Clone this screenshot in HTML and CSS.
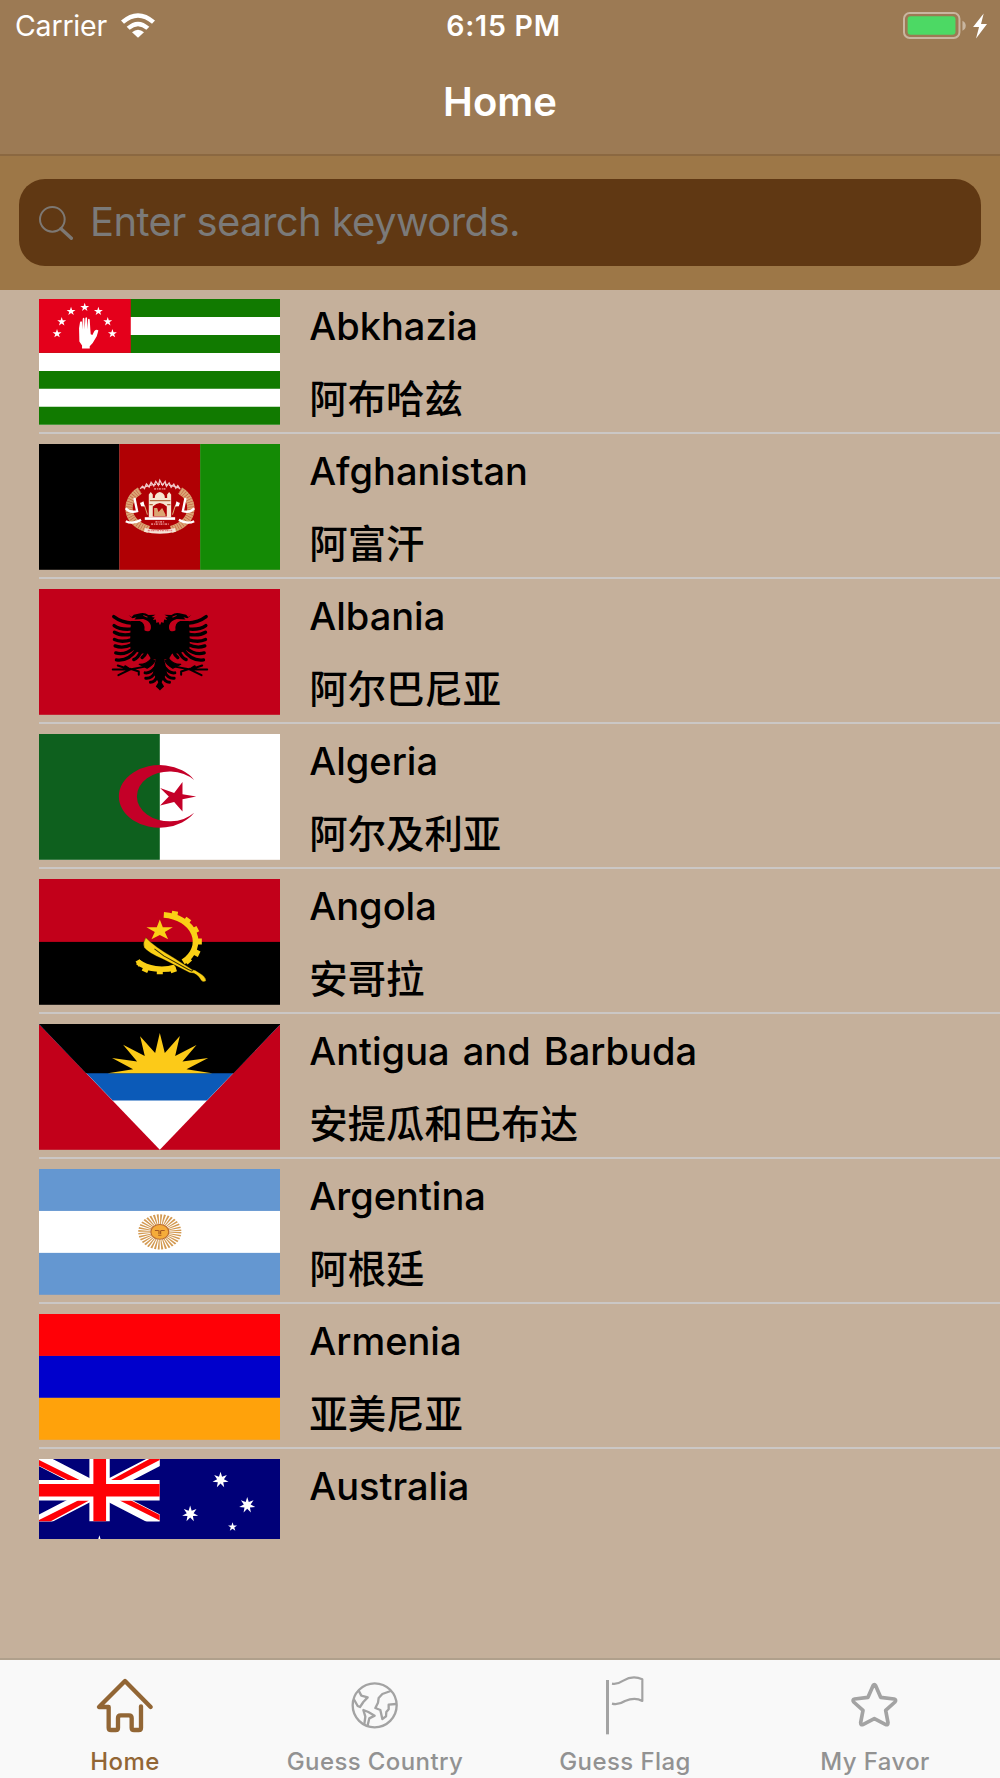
FILE: index.html
```html
<!DOCTYPE html>
<html lang="en">
<head>
    <meta charset="UTF-8">
    <meta name="viewport" content="width=device-width, initial-scale=1.0">
    <title>Home</title>
    <link rel="stylesheet" href="styles.css">
</head>
<body>
    <div class="screen">
        <!-- Status bar and title -->
        <header class="header">
            <div class="status">
                <div class="status-left">
                    <span class="carrier">Carrier</span>
                    <svg class="wifi" viewBox="0 0 102 74">
                        <path d="M0 22Q51-22 102 22L93 32Q51-4 9 32Z"/>
                        <path d="M17 41Q51 10 85 41L76 50Q51 29 26 50Z"/>
                        <path d="M33 57Q51 42 69 57L51 74Z"/>
                    </svg>
                </div>
                <span class="time">6:15 PM</span>
                <div class="status-right">
                    <svg class="battery" viewBox="0 0 256 84">
                        <rect x="3" y="6" width="167" height="75" rx="17" fill="none" stroke="#c9b6a0" stroke-width="6"/>
                        <rect x="14" y="16" width="144" height="55" rx="9" fill="#4cd964"/>
                        <path d="M179 29Q189 34 189 44T179 59Z" fill="#c9b6a0"/>
                        <path d="M243 7L211 48H229L220 83L253 39H235Z" fill="#fff"/>
                    </svg>
                </div>
            </div>
            <h1 class="title">Home</h1>
        </header>

        <!-- Search -->
        <div class="search">
            <div class="search-field">
                <svg class="search-icon" viewBox="0 0 102 102" fill="none" stroke="#7d7873" stroke-linecap="round">
                    <circle cx="40" cy="40" r="37" stroke-width="6"/>
                    <path d="M66 68L97 97" stroke-width="10"/>
                </svg>
                <span class="placeholder">Enter search keywords.</span>
            </div>
        </div>

        <!-- Country list -->
        <ul class="list">
            <li class="row">
                <svg class="flag" viewBox="0 0 724 378" preserveAspectRatio="none">
                    <defs>
                        <path id="star5" d="M0-14L3.200-4.300H13.400L5.300 1.700L8.200 11.300L0 5.400L-8.200 11.300L-5.300 1.700L-13.400-4.300H-3.200Z"/>
                    </defs>
                    <rect width="724" height="378" fill="#fff"/>
                    <path d="M0 0H724V54H0ZM0 108H724V162H0ZM0 216H724V270H0ZM0 324H724V378H0Z" fill="#117a00"/>
                    <rect width="275" height="162" fill="#e4001b"/>
                    <g transform="translate(-117 -44)" fill="#fff">
                        <use href="#star5" x="254" y="69"/>
                        <use href="#star5" x="213" y="81"/>
                        <use href="#star5" x="295" y="81"/>
                        <use href="#star5" x="185" y="112"/>
                        <use href="#star5" x="323" y="112"/>
                        <use href="#star5" x="171" y="148"/>
                        <use href="#star5" x="337" y="148"/>
                        <path d="M246 193V184L238 172L237 132L240 113Q244 108 246 114L247 136L248 103Q251 98 253 103L254 135L256 101Q259 96 261 101L262 135L264 105Q267 101 269 106L271 138L272 150L277 152L283 140Q290 134 295 139L290 156L278 176L269 186V193Z"/>
                    </g>
                </svg>
                <div class="names"><span class="en">Abkhazia</span><span class="zh">阿布哈兹</span></div>
            </li>
            <li class="row">
                <svg class="flag" viewBox="0 0 724 378" preserveAspectRatio="none">
                    <rect width="241" height="378" fill="#000"/>
                    <rect x="241" width="242" height="378" fill="#b00004"/>
                    <rect x="483" width="241" height="378" fill="#148a05"/>
                    <g transform="translate(-26 -28)" fill="none">
                        <g stroke="#dba673" stroke-width="22">
                            <path d="M328 168C284 195 278 260 355 285M449 168C493 195 499 260 422 285"/>
                        </g>
                        <g stroke="#c0503c" stroke-width="20" stroke-dasharray="1.500 6">
                            <path d="M328 168C284 195 278 260 355 285M449 168C493 195 499 260 422 285"/>
                        </g>
                        <g stroke="#fff" stroke-width="7">
                            <path d="M286 221Q298 236 320 230L312 190M491 221Q479 236 457 230L465 190M286 260Q306 270 332 256M491 260Q471 270 445 256"/>
                            <path d="M342 286Q388 298 435 286" stroke-width="12" stroke="#f5e3d8"/>
                        </g>
                        <path d="M329 163L336 155L342 162L348 148L356 157L362 143L370 154L376 140L384 152L388 137L396 152L404 141L408 155L416 145L422 158L430 149L436 161L442 153L449 164" stroke="#f0c8c8" stroke-width="4"/>
                        <path d="M333 160Q388 138 446 160" stroke="#f0c8c8" stroke-width="4" stroke-dasharray="9 3"/>
                        <path d="M371 163H405M362 269H415M375 262H402M352 288H425" stroke="#e07a7a" stroke-width="5" stroke-dasharray="6 3 3 2"/>
                        <path d="M355 248V180L361 172L367 180V190H373Q372 176 388 172Q404 176 403 190H410V180L416 172L422 180V248Z" fill="#f6e6d0"/>
                        <path d="M367 246V216Q388 194 409 216V246Z" fill="#b00004"/>
                        <path d="M371 244V220H380L384 232L395 220L405 240V244Z" fill="#dba673"/>
                        <path d="M358 198H420M357 210H367M410 210H420" stroke="#b5683f" stroke-width="4"/>
                        <path d="M343 252H434" stroke="#fff" stroke-width="8"/>
                        <path d="M330 204L343 215L351 240M447 204L434 215L426 240" stroke="#dba673" stroke-width="3"/>
                        <path d="M329 206L339 200L343 216L332 215ZM448 206L438 200L434 216L445 215Z" fill="#fff"/>
                    </g>
                </svg>
                <div class="names"><span class="en">Afghanistan</span><span class="zh">阿富汗</span></div>
            </li>
            <li class="row">
                <svg class="flag" viewBox="0 0 724 378" preserveAspectRatio="none">
                    <defs>
                        <!-- left half of the eagle, mirrored for the right -->
                        <g id="eagle" fill="none" stroke="#000" stroke-linecap="round" stroke-linejoin="round">
                            <path d="M389 138L384 127L378 130L376 120L367 121L373 114L363 112L375 105L354 106Q343 98 330 101L310 105L304 112L294 106L306 116L318 113L312 120L338 118Q356 122 361 137Q363 150 357 154Q348 157 342 152Q345 130 328 124L302 124Q298 170 300 206L330 222L352 222L362 238L376 240L370 264L368 280L389 318Z" fill="#000" stroke="none"/>
                            <path d="M388.500 140V318" stroke-width="2"/>
                            <path d="M340 108L350 112" stroke="#c2001a" stroke-width="3"/>
                            <path d="M307 131Q272 128 250 111M305 148Q270 152 251 138M305 164Q271 170 252 158M305 180Q273 190 252 180M305 195Q277 208 254 199M310 205Q284 228 256 220M319 210Q294 246 258 241M333 214Q322 236 310 240M349 214Q344 228 335 234" stroke-width="10"/>
                            <path d="M363 235Q352 254 326 254L350 266Q370 254 374 242" fill="#000" stroke-width="3"/>
                            <path d="M340 262L298 270L262 258M298 270L247 270M298 270L264 287M300 268L325 276L325 286M300 270L284 260" stroke-width="6"/>
                            <path d="M372 266Q360 282 344 280M374 278Q364 298 346 296M380 290Q374 308 360 308" stroke-width="9"/>
                            <path d="M389 333L376 321L385 306H389Z" fill="#000" stroke="none"/>
                        </g>
                    </defs>
                    <rect width="724" height="378" fill="#c2001a"/>
                    <g transform="translate(-26 -28)">
                        <use href="#eagle"/>
                        <use href="#eagle" transform="translate(777 0) scale(-1 1)"/>
                    </g>
                </svg>
                <div class="names"><span class="en">Albania</span><span class="zh">阿尔巴尼亚</span></div>
            </li>
            <li class="row">
                <svg class="flag" viewBox="0 0 724 378" preserveAspectRatio="none">
                    <rect width="724" height="378" fill="#fff"/>
                    <rect width="362" height="378" fill="#0e601e"/>
                    <g transform="translate(-26 -28)" fill="#c40028">
                        <path d="M491 166A122 94 0 1 0 491 265A98 75 0 1 1 491 166Z"/>
                        <path d="M497 216L456 209V172L431 205L389 190L415 216L389 243L431 232L456 261V224Z"/>
                    </g>
                </svg>
                <div class="names"><span class="en">Algeria</span><span class="zh">阿尔及利亚</span></div>
            </li>
            <li class="row">
                <svg class="flag" viewBox="0 0 724 378" preserveAspectRatio="none">
                    <rect width="724" height="378" fill="#000"/>
                    <rect width="724" height="189" fill="#c2001a"/>
                    <g transform="translate(-26 -463)" fill="#fad016">
                        <g fill="none" stroke="#fad016">
                            <path d="M400 571A104 80 0 0 1 458 712M322 712A104 80 0 0 0 434 728" stroke-width="17"/>
                            <path d="M431 577L434 560M464 597L475 582M485 621L502 612M496 651H514M490 681L506 689M468 703L478 714M349 727L342 742M388 735V749M426 728L431 743M332 712L320 719" stroke-width="18"/>
                        </g>
                        <path d="M388 585L397 608H427L403 622L413 644L388 631L363 644L373 622L348 608H379Z"/>
                        <path d="M346 639Q336 655 341 669Q354 686 400 705L478 745L490 746Q505 753 512 768Q520 776 527 768Q524 754 508 746L494 737L486 736L430 700Q370 665 346 639Z" stroke="#000" stroke-width="1"/>
                        <path d="M372 673L400 694L472 734L484 740L488 734" fill="none" stroke="#3a3000" stroke-width="3"/>
                    </g>
                </svg>
                <div class="names"><span class="en">Angola</span><span class="zh">安哥拉</span></div>
            </li>
            <li class="row">
                <svg class="flag" viewBox="0 0 724 378" preserveAspectRatio="none">
                    <rect width="724" height="378" fill="#c2001a"/>
                    <path d="M0 0H724L362 378Z" fill="#fff"/>
                    <path d="M0 0H724L503 230H221Z" fill="#0b5ab8"/>
                    <path d="M0 0H724L583 148H141Z" fill="#000"/>
                    <path d="M206 148L282 136L219 102L294 113L252 62L317 96L303 37L348 87L362 27L377 87L422 36L408 96L472 63L430 113L507 102L442 136L519 148Z" fill="#fcca18"/>
                </svg>
                <div class="names"><span class="en">Antigua and Barbuda</span><span class="zh">安提瓜和巴布达</span></div>
            </li>
            <li class="row">
                <svg class="flag" viewBox="0 0 724 378" preserveAspectRatio="none">
                    <rect width="724" height="378" fill="#6497d1"/>
                    <rect y="126" width="724" height="126" fill="#fff"/>
                    <g transform="translate(362 189) scale(1.22 1)" fill="none">
                        <circle r="38" stroke="#d39a52" stroke-width="30" pathLength="72" stroke-dasharray="1.100 0.900"/>
                        <circle r="22" fill="#f5ac3a" stroke="#b9692b" stroke-width="3"/>
                        <path d="M-12-4H-3M3-4H12M-2-4V6M2-4V6M-4 10H4" stroke="#a85a20" stroke-width="3"/>
                    </g>
                </svg>
                <div class="names"><span class="en">Argentina</span><span class="zh">阿根廷</span></div>
            </li>
            <li class="row">
                <svg class="flag" viewBox="0 0 724 378" preserveAspectRatio="none">
                    <rect width="724" height="126" fill="#ff0006"/>
                    <rect y="126" width="724" height="126" fill="#0000cc"/>
                    <rect y="252" width="724" height="126" fill="#ffa20b"/>
                </svg>
                <div class="names"><span class="en">Armenia</span><span class="zh">亚美尼亚</span></div>
            </li>
            <li class="row row-cut">
                <svg class="flag" viewBox="0 0 724 378" preserveAspectRatio="none">
                    <defs>
                        <path id="star7" d="M0-25L4.600-9.500L19-15L10.200-2.300L24 5.500L8.200 6.500L11 22L0 10.500L-11 22L-8.200 6.500L-24 5.500L-10.200-2.300L-19-15L-4.600-9.500Z"/>
                        <clipPath id="jack"><rect width="362" height="188"/></clipPath>
                    </defs>
                    <rect width="724" height="378" fill="#000078"/>
                    <g clip-path="url(#jack)">
                        <path d="M0 0L362 188M362 0L0 188" stroke="#fff" stroke-width="38"/>
                        <path d="M0 3V20L86 63H121ZM216 63H246L362 3V0H331ZM0 183V188H34L150 125H117ZM242 125H276L362 168V185Z" fill="#ff0006"/>
                        <path d="M151 0H212V63H362V125H212V188H151V125H0V63H151Z" fill="#fff"/>
                        <path d="M163 0H201V75H362V113H201V188H163V113H0V75H163Z" fill="#ff0006"/>
                    </g>
                    <g fill="#fff">
                        <use href="#star7" x="544" y="63"/>
                        <use href="#star7" x="624" y="139"/>
                        <use href="#star7" x="453" y="165"/>
                        <use href="#star5" x="580" y="204"/>
                        <use href="#star7" transform="translate(181 284) scale(2.200)"/>
                    </g>
                </svg>
                <div class="names"><span class="en">Australia</span></div>
            </li>
        </ul>

        <!-- Tab bar -->
        <nav class="tabs">
            <a class="tab active">
                <svg class="tab-icon" viewBox="285 78 180 180">
                    <path d="M452 171L375 93L297 171H326V233Q326 240 333 240H347Q354 240 354 233V204Q354 196 362 196H387Q395 196 395 204V233Q395 240 402 240H416Q423 240 423 233V169" stroke-width="13"/>
                </svg>
                <span>Home</span>
            </a>
            <a class="tab">
                <svg class="tab-icon" viewBox="285 78 180 180">
                    <circle cx="374" cy="166" r="66" stroke-width="7"/>
                    <path d="M326 122L334 137L353 142L340 156L330 171L323 168L313 150M343 222L346 200L340 180L355 186L374 197L358 205L353 226M422 123L397 132L386 144L384 158L376 174L391 180L397 207L408 199L409 186L416 178V164L438 162" stroke-width="7"/>
                </svg>
                <span>Guess Country</span>
            </a>
            <a class="tab">
                <svg class="tab-icon" viewBox="285 78 180 180" stroke-linecap="butt">
                    <path d="M322.500 90V253" stroke-width="9"/>
                    <path d="M336 101Q352 104 370 92Q398 75 427 88V153Q405 140 375 153Q355 166 336 161" stroke-width="6.500"/>
                </svg>
                <span>Guess Flag</span>
            </a>
            <a class="tab">
                <svg class="tab-icon" viewBox="285 78 180 180">
                    <path d="M369 107Q373 100 377 107L392 142L432 147Q440 149 435 156L407 181L414 218Q414 227 406 223L373 206L340 223Q332 227 332 218L339 181L311 156Q306 149 314 147L354 142Z" stroke-width="11"/>
                </svg>
                <span>My Favor</span>
            </a>
        </nav>
    </div>
</body>
</html>
```

FILE: styles.css
```css
* {
    box-sizing: border-box;
}

body {
    margin: 0;
    font-family: Inter, "Noto Sans CJK SC", sans-serif;
    background-color: #c5b09b;
}

.screen {
    display: flex;
    flex-direction: column;
    width: 1000px;
    height: 1778px;
    overflow: hidden;
}

/* Header */
.header {
    height: 156px;
    background-color: #9c7a54;
    border-bottom: 2px solid #8b6841;
    color: #fff;
}

.status {
    display: grid;
    grid-template-columns: 1fr auto 1fr;
    align-items: center;
    height: 50px;
    padding: 0 12px 0 15px;
    font-size: 28.5px;
}

.status-left {
    display: flex;
    align-items: center;
    gap: 14px;
}

.carrier {
    letter-spacing: -0.2px;
}

.wifi {
    width: 34px;
    height: 25px;
    fill: #fff;
}

.time {
    padding-left: 4px;
    font-weight: 600;
    letter-spacing: 0.8px;
}

.status-right {
    display: flex;
    justify-content: flex-end;
}

.battery {
    width: 85px;
    height: 28px;
}

.title {
    margin: 0;
    font-size: 40px;
    font-weight: 600;
    line-height: 104px;
    text-align: center;
}

/* Search */
.search {
    height: 134px;
    padding: 23px 19px 24px;
    background-color: #9d7747;
}

.search-field {
    display: flex;
    align-items: center;
    height: 87px;
    padding-left: 20px;
    border-radius: 26px;
    background-color: #603813;
}

.search-icon {
    width: 34px;
    height: 34px;
}

.placeholder {
    margin-left: 17px;
    padding-bottom: 3px;
    font-size: 40px;
    letter-spacing: -0.6px;
    color: #7b7a79;
}

/* List, the first row starts 1px under the search bar */
.list {
    flex: 1;
    margin: -1px 0 0;
    padding: 0 0 0 38.7px;
    list-style: none;
}

.row {
    display: flex;
    height: 145px;
    padding-top: 10.3px;
    border-bottom: 2px solid #cbc7c5;
}

.row-cut {
    height: 90px;
    border-bottom: none;
    overflow: hidden;
}

.flag {
    flex: none;
    width: 241.6px;
    height: 125.8px;
}

.names {
    display: flex;
    flex-direction: column;
    margin-left: 29px;
    font-size: 38px;
    font-weight: 500;
    color: #000;
}

.en {
    line-height: 55px;
    word-spacing: 3px;
}

.zh {
    margin-top: 14px;
    font-family: "Noto Sans CJK SC", sans-serif;
    font-size: 38.4px;
    line-height: 56px;
}

/* Tabs */
.tabs {
    display: grid;
    grid-template-columns: repeat(4, 1fr);
    height: 120px;
    border-top: 2px solid #b0a08c;
    background-color: #f9f9f9;
}

.tab {
    display: flex;
    flex-direction: column;
    align-items: center;
    padding-top: 16px;
    font-size: 24px;
    font-weight: 500;
    letter-spacing: 0.4px;
    color: #929292;
}

.tab.active {
    color: #926635;
}

.tab-icon {
    width: 60px;
    height: 60px;
    margin-bottom: 11px;
    fill: none;
    stroke: #a3a3a3;
    stroke-linejoin: round;
}

.tab-icon:not([stroke-linecap]) {
    stroke-linecap: round;
}

.active .tab-icon {
    stroke: #926635;
}
```
